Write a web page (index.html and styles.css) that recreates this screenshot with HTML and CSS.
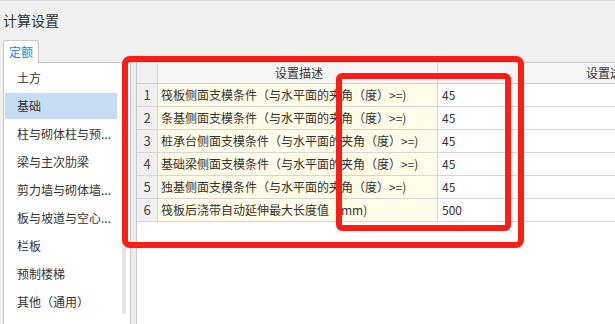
FILE: index.html
```html
<!DOCTYPE html>
<html lang="zh-CN">
<head>
<meta charset="utf-8">
<title>计算设置</title>
<link rel="stylesheet" href="styles.css">
</head>
<body>
<div class="window">
  <div class="title">计算设置</div>
  <div class="tabbar"><div class="tab">定额</div></div>
  <div class="main">
    <div class="sidebar">
      <ul class="list">
        <li class="item">土方</li>
        <li class="item selected">基础</li>
        <li class="item">柱与砌体柱与预...</li>
        <li class="item">梁与主次肋梁</li>
        <li class="item">剪力墙与砌体墙...</li>
        <li class="item">板与坡道与空心...</li>
        <li class="item">栏板</li>
        <li class="item">预制楼梯</li>
        <li class="item">其他（通用）</li>
      </ul>
      <div class="vscroll"></div>
    </div>
    <div class="splitter"></div>
    <div class="grid">
      <div class="row head">
        <div class="cell num"></div>
        <div class="cell desc">设置描述</div>
        <div class="cell val">设置选项</div>
      </div>
      <div class="row">
        <div class="cell num">1</div>
        <div class="cell desc">筏板侧面支模条件（与水平面的夹角（度）&gt;=)</div>
        <div class="cell val">45</div>
      </div>
      <div class="row">
        <div class="cell num">2</div>
        <div class="cell desc">条基侧面支模条件（与水平面的夹角（度）&gt;=)</div>
        <div class="cell val">45</div>
      </div>
      <div class="row">
        <div class="cell num">3</div>
        <div class="cell desc">桩承台侧面支模条件（与水平面的夹角（度）&gt;=)</div>
        <div class="cell val">45</div>
      </div>
      <div class="row">
        <div class="cell num">4</div>
        <div class="cell desc">基础梁侧面支模条件（与水平面的夹角（度）&gt;=)</div>
        <div class="cell val">45</div>
      </div>
      <div class="row">
        <div class="cell num">5</div>
        <div class="cell desc">独基侧面支模条件（与水平面的夹角（度）&gt;=)</div>
        <div class="cell val">45</div>
      </div>
      <div class="row">
        <div class="cell num">6</div>
        <div class="cell desc">筏板后浇带自动延伸最大长度值（mm)</div>
        <div class="cell val">500</div>
      </div>
    </div>
  </div>
  <div class="mark mark-outer"></div>
  <div class="mark mark-inner"></div>
</div>
</body>
</html>
```

FILE: styles.css
```css
* { box-sizing: border-box; }
html, body { margin: 0; padding: 0; }
body {
  background: #f0f0f0;
  font-family: "Noto Sans CJK SC", "Noto Sans", sans-serif;
  color: #333;
}
.window {
  position: relative;
  width: 615px;
  height: 324px;
  overflow: hidden;
  background: #f0f0f0;
  border-top: 1px solid #dcdcdc;
}
.title {
  height: 39px;
  line-height: 39px;
  padding-left: 3px;
  font-size: 14px;
  color: #333;
}
.tabbar {
  height: 22px;
  padding-left: 3px;
  display: flex;
  align-items: flex-end;
}
.tab {
  position: relative;
  z-index: 1;
  width: 36px;
  height: 23px;
  margin-bottom: -1px;
  border: 1px solid #c9c9c9;
  border-bottom: none;
  border-radius: 3px 3px 0 0;
  background: #fff;
  color: #2d7fe0;
  font-size: 12px;
  line-height: 21px;
  text-align: center;
}
.main {
  display: flex;
  margin-left: 3px;
  height: 262px;
  background: #fff;
  border-top: 1px solid #c9c9c9;
  border-left: 1px solid #c9c9c9;
}
.sidebar {
  display: flex;
  width: 126px;
  flex: none;
}
.list {
  list-style: none;
  margin: 0;
  padding: 2px 0 0 1px;
  width: 118px;
}
.item {
  width: 112px;
  height: 26px;
  margin-bottom: 2px;
  padding-left: 12px;
  line-height: 26px;
  font-size: 12px;
  color: #333;
  white-space: nowrap;
}
.item.selected { background: #c6dcf2; }
.vscroll {
  width: 4px;
  height: 250px;
  margin-top: 1px;
  margin-right: 4px;
  border-radius: 2px;
  background: #e4e4e4;
}
.splitter {
  width: 7px;
  flex: none;
  background: #ececec;
  border-left: 1px solid #c8c8c8;
  border-right: 1px solid #c8c8c8;
}
.grid {
  flex: 1;
  overflow: hidden;
}
.row {
  display: flex;
  height: 23px;
  border-bottom: 1px solid #d6d6d6;
  width: 641px;
}
.row.head {
  height: 21px;
  background: #f5f5f5;
  border-bottom-color: #cfcfcf;
}
.cell {
  flex: none;
  height: 100%;
  border-right: 1px solid #d6d6d6;
  font-size: 12px;
  line-height: 22px;
  white-space: nowrap;
  overflow: hidden;
}
.head .cell { line-height: 20px; text-align: center; }
.num {
  width: 21px;
  background: #efefef;
  text-align: center;
  font-size: 13px;
  color: #444;
}
.head .num { background: #f0f0f0; }
.desc {
  width: 280px;
  padding-left: 3px;
  background: #fffce8;
}
.head .desc { background: #f5f5f5; }
.val {
  width: 340px;
  padding-left: 4px;
  border-right: none;
}
.mark {
  position: absolute;
  border: 6px solid #fa1e16;
  pointer-events: none;
}
.mark-outer {
  left: 122px;
  top: 55px;
  width: 402px;
  height: 192px;
  border-radius: 8px;
}
.mark-inner {
  left: 336px;
  top: 72px;
  width: 175px;
  height: 158px;
  border-radius: 6px;
}
```
